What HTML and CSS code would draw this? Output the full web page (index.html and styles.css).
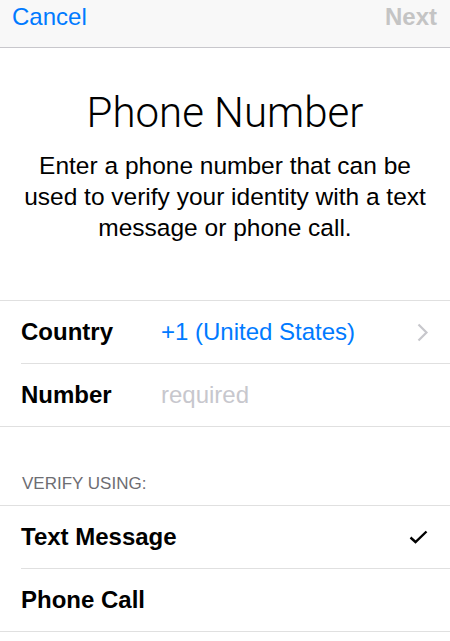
FILE: index.html
```html
<!DOCTYPE html>
<html>
<head>
<meta charset="utf-8">
<link rel="stylesheet" href="styles.css">
</head>
<body>
<div class="navbar">
  <span class="nav-btn cancel">Cancel</span>
  <span class="nav-btn next">Next</span>
</div>
<div class="intro">
  <h1 class="title">Phone Number</h1>
  <p class="desc">Enter a phone number that can be used to verify your identity with a text message or phone call.</p>
</div>
<div class="group">
  <div class="row">
    <span class="label">Country</span>
    <span class="value blue">+1 (United States)</span>
    <svg class="chevron" width="12" height="19" viewBox="0 0 12 19"><path d="M1.5 1.5 L9.5 9.5 L1.5 17.5" fill="none" stroke="#c7c7cc" stroke-width="2.2"/></svg>
  </div>
  <div class="row">
    <span class="label">Number</span>
    <span class="value placeholder">required</span>
  </div>
</div>
<div class="section-header">VERIFY USING:</div>
<div class="group">
  <div class="row">
    <span class="label wide">Text Message</span>
    <svg class="check" width="19" height="14" viewBox="0 0 19 14"><path d="M1.5 7.5 L6.5 12 L17.5 1.5" fill="none" stroke="#000" stroke-width="2.4"/></svg>
  </div>
  <div class="row">
    <span class="label wide">Phone Call</span>
  </div>
</div>
</body>
</html>
```
FILE: styles.css
```css
html, body {
  margin: 0;
  padding: 0;
  background: #fff;
  font-family: "Liberation Sans", Arial, sans-serif;
  color: #000;
}
.navbar {
  height: 47px;
  background: #f8f8f8;
  border-bottom: 1px solid #c8c7cc;
  display: flex;
  justify-content: space-between;
  align-items: flex-start;
  padding: 0 13px 0 12px;
}
.nav-btn {
  font-size: 24px;
  line-height: 32px;
  margin-top: 1px;
}
.cancel { color: #007aff; }
.next { color: #c4c4c4; font-weight: bold; }
.intro {
  text-align: center;
  padding: 0 18px;
}
.title {
  font-family: Roboto, "Liberation Sans", sans-serif;
  font-size: 42px;
  font-weight: 300;
  margin: 40px 0 0;
  line-height: 50px;
}
.desc {
  font-size: 24.5px;
  line-height: 31px;
  margin: 12px 0 0;
}
.group {
  border-top: 1px solid #e0e0e0;
  border-bottom: 1px solid #e0e0e0;
}
.intro + .group { margin-top: 57px; }
.row {
  height: 62px;
  display: flex;
  align-items: center;
  margin-left: 21px;
  padding-right: 21px;
}
.row + .row { border-top: 1px solid #e0e0e0; }
.label {
  font-size: 24px;
  font-weight: bold;
  width: 140px;
  flex: none;
}
.label.wide { width: auto; flex: 1; }
.value {
  font-size: 24px;
  flex: 1;
}
.blue { color: #007aff; }
.placeholder { color: #c7c7cd; }
.chevron { flex: none; }
.check { flex: none; margin-right: 1px; }
.section-header {
  font-size: 17px;
  color: #6d6d72;
  padding: 47px 0 12px 22px;
  line-height: 19px;
}
```
